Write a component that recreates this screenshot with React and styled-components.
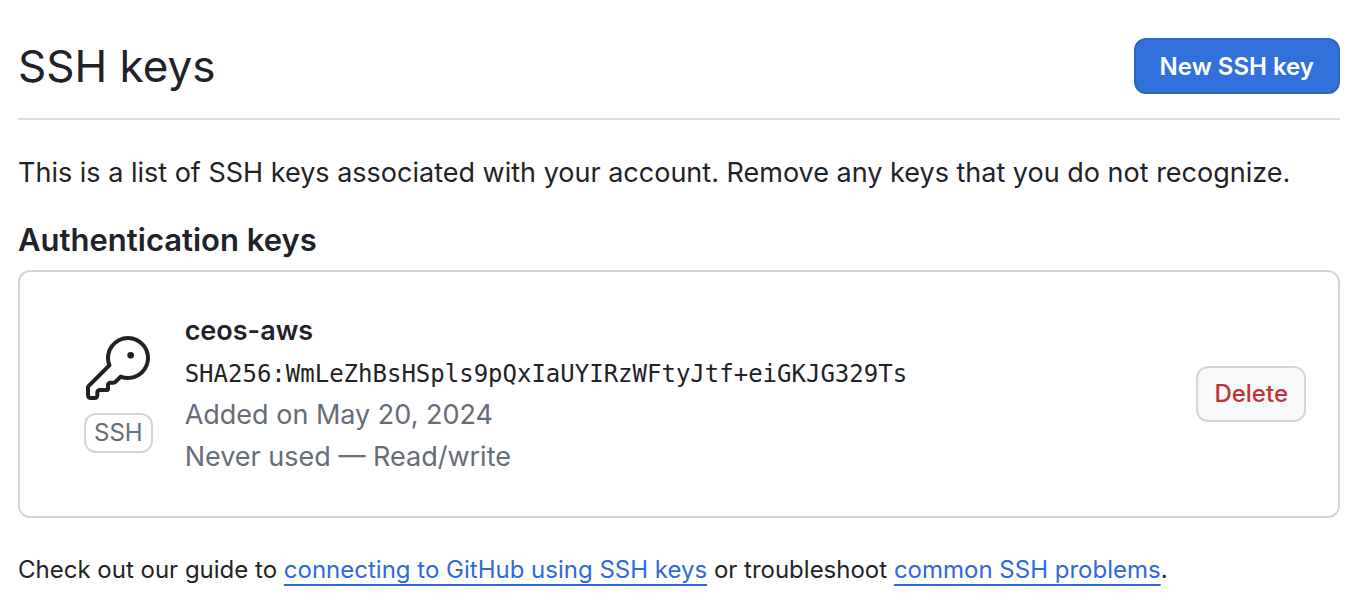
import React from "react";
import styled, { createGlobalStyle, css } from "styled-components";

const GlobalStyle = createGlobalStyle`
  *, *::before, *::after { box-sizing: border-box; }
  body {
    margin: 0;
    background: #ffffff;
    color: #1f2328;
    font-family: Inter, "Liberation Sans", sans-serif;
    font-size: 27px;
    line-height: 42px;
  }
`;

const Page = styled.main`
  padding: 30px 32px 12px 18px;
`;

const PageHeader = styled.header`
  display: flex;
  align-items: center;
  justify-content: space-between;
  gap: 16px;
  padding-bottom: 16px;
  border-bottom: 2px solid #d8dee4;
`;

const Title = styled.h1`
  margin: 0;
  font-size: 44px;
  font-weight: 400;
  line-height: 72px;
`;

const Button = styled.button`
  flex: none;
  height: 56px;
  border: 2px solid;
  border-radius: 12px;
  font-family: inherit;
  font-size: 24px;
  font-weight: 500;
  line-height: 40px;
  cursor: pointer;
  ${({ $variant }) =>
    $variant === "primary"
      ? css`
          padding: 2px 24px 0;
          color: #ffffff;
          background: #3270dc;
          border-color: #2f65c2;
          font-weight: 600;
        `
      : css`
          padding: 0 16px;
          color: #c03436;
          background: #f6f8fa;
          border-color: #d0d7de;
        `}
`;

const Intro = styled.p`
  margin: 32px 0 24px;
`;

const SectionTitle = styled.h2`
  margin: 0 0 8px;
  font-size: 31px;
  font-weight: 600;
  line-height: 44px;
`;

const KeyList = styled.ul`
  margin: 0;
  padding: 0;
  list-style: none;
  border: 2px solid #d0d7de;
  border-radius: 12px;
`;

const KeyRow = styled.li`
  display: flex;
  align-items: center;
  gap: 32px;
  padding: 38px 32px 38px 64px;
`;

const KeyKind = styled.div`
  display: flex;
  flex-direction: column;
  align-items: center;
  gap: 13px;
`;

const KeyIcon = styled.svg`
  display: block;
  width: 64px;
  height: 64px;
  fill: #1f2328;
`;

const Badge = styled.span`
  padding: 0 8px;
  border: 2px solid #d0d7de;
  border-radius: 12px;
  color: #656d76;
  font-size: 24px;
  line-height: 36px;
`;

const KeyDetails = styled.div`
  display: flex;
  flex: 1;
  flex-direction: column;
  min-width: 0;
`;

const KeyName = styled.strong`
  font-weight: 600;
`;

const Fingerprint = styled.code`
  padding-top: 2px;
  font-family: "DejaVu Sans Mono", monospace;
  font-size: 24px;
  line-height: 40px;
  overflow-wrap: anywhere;
`;

const Meta = styled.span`
  color: #656d76;
`;

const HelpText = styled.p`
  margin: 32px 0 0;
  font-size: 24px;
  line-height: 40px;
`;

const Link = styled.a`
  color: #2f69da;
  text-decoration: underline;
  text-decoration-thickness: 2px;
  text-underline-offset: 6px;
  text-decoration-skip-ink: none;
`;

export default function App() {
  return (
    <>
      <GlobalStyle />
      <Page>
        <PageHeader>
          <Title>SSH keys</Title>
          <Button type="button" $variant="primary">New SSH key</Button>
        </PageHeader>
        <Intro>
          This is a list of SSH keys associated with your account. Remove any keys that you do not recognize.
        </Intro>
        <SectionTitle>Authentication keys</SectionTitle>
        <KeyList>
          <KeyRow>
            <KeyKind>
              <KeyIcon viewBox="0 0 24 24" aria-hidden="true">
                <path d="M16.75 8.5a1.25 1.25 0 1 0 0-2.5 1.25 1.25 0 0 0 0 2.5Z" />
                <path d="M15.75 0a8.25 8.25 0 1 1-2.541 16.101l-1.636 1.636a1.744 1.744 0 0 1-1.237.513H9.25a.25.25 0 0 0-.25.25v1.448a.876.876 0 0 1-.256.619l-.214.213a.75.75 0 0 1-.545.22H5.25a.25.25 0 0 0-.25.25v1A1.75 1.75 0 0 1 3.25 24h-1.5A1.75 1.75 0 0 1 0 22.25v-2.836c0-.464.185-.908.513-1.236l7.386-7.388A8.249 8.249 0 0 1 15.75 0ZM9 8.25a6.733 6.733 0 0 0 .463 2.462.75.75 0 0 1-.168.804l-7.722 7.721a.25.25 0 0 0-.073.177v2.836c0 .138.112.25.25.25h1.5a.25.25 0 0 0 .25-.25v-1c0-.966.784-1.75 1.75-1.75H7.5v-1c0-.966.784-1.75 1.75-1.75h1.086a.25.25 0 0 0 .177-.073l1.971-1.972a.75.75 0 0 1 .804-.168A6.75 6.75 0 1 0 9 8.25Z" />
              </KeyIcon>
              <Badge>SSH</Badge>
            </KeyKind>
            <KeyDetails>
              <KeyName>ceos-aws</KeyName>
              <Fingerprint>SHA256:WmLeZhBsHSpls9pQxIaUYIRzWFtyJtf+eiGKJG329Ts</Fingerprint>
              <Meta>Added on May 20, 2024</Meta>
              <Meta>Never used — Read/write</Meta>
            </KeyDetails>
            <Button type="button" $variant="danger">Delete</Button>
          </KeyRow>
        </KeyList>
        <HelpText>
          Check out our guide to <Link href="#connecting">connecting to GitHub using SSH keys</Link> or troubleshoot{" "}
          <Link href="#problems">common SSH problems</Link>.
        </HelpText>
      </Page>
    </>
  );
}
